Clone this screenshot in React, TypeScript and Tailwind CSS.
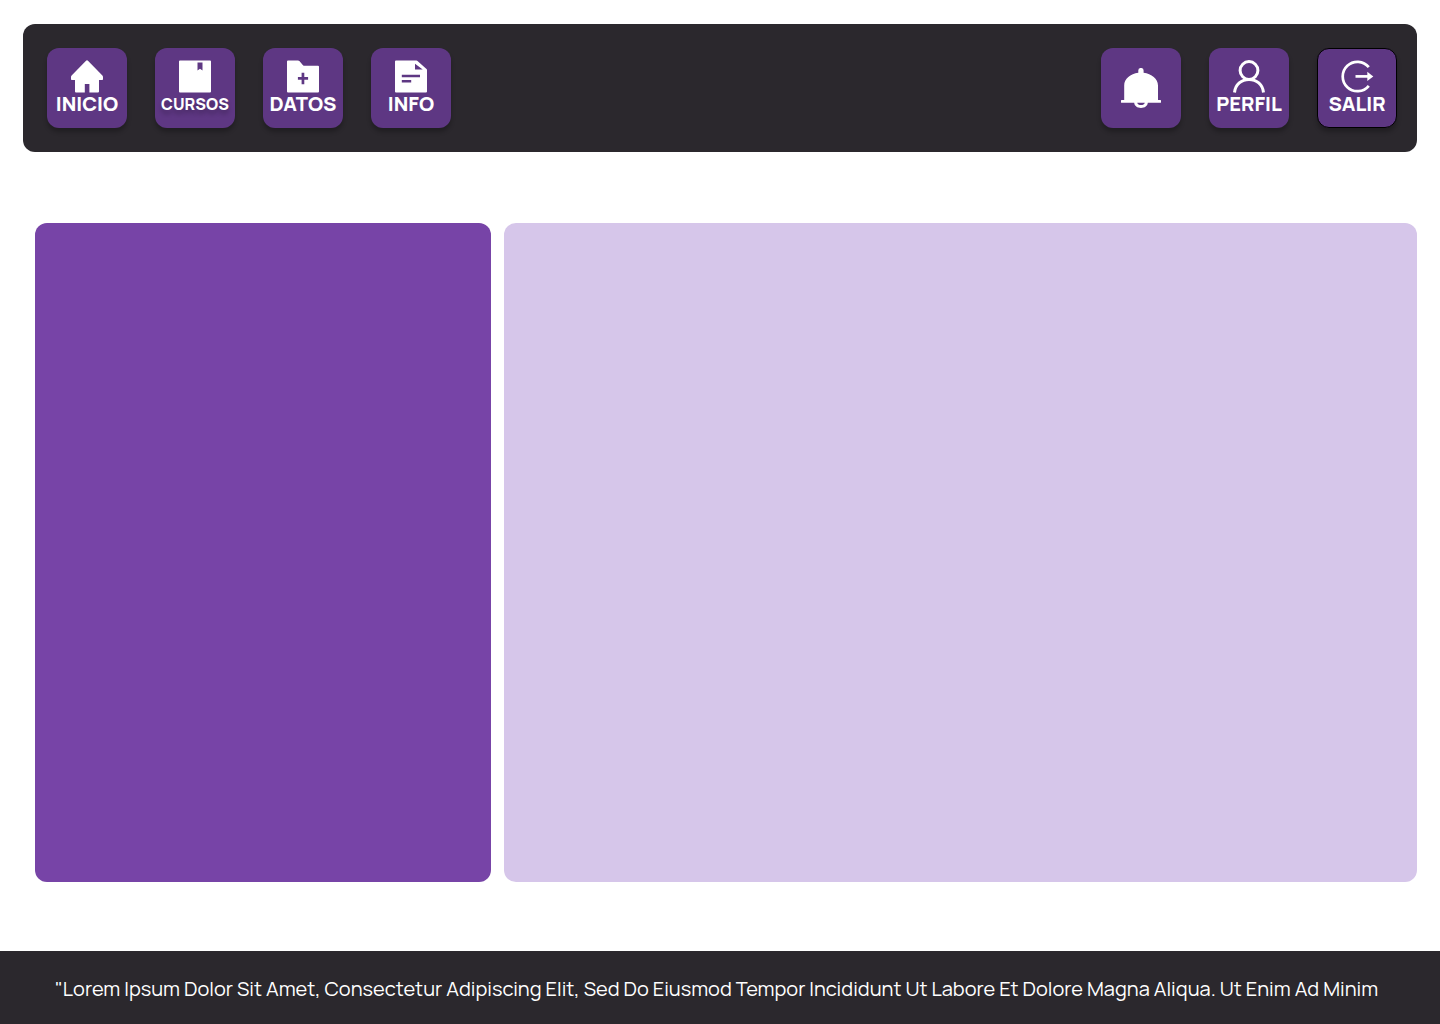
import type { ReactNode } from "react";

type TileProps = {
  label: string;
  icon: ReactNode;
  labelClass?: string;
  outlined?: boolean;
  iconOnly?: boolean;
};

function Tile({ label, icon, labelClass = "text-xl", outlined, iconOnly }: TileProps) {
  return (
    <button
      type="button"
      aria-label={label}
      className={`flex size-20 shrink-0 cursor-pointer flex-col items-center rounded-xl bg-[#5e3783] text-white shadow-[0_4px_4px_rgba(0,0,0,0.25)] ${
        outlined ? "border border-black pt-[11px]" : iconOnly ? "justify-center" : "pt-3"
      }`}
    >
      {icon}
      {!iconOnly && (
        <span className={`whitespace-nowrap leading-6 font-extrabold ${labelClass}`}>{label}</span>
      )}
    </button>
  );
}

const iconProps = {
  viewBox: "0 0 32 32",
  className: "size-8 shrink-0 overflow-visible",
  "aria-hidden": true,
} as const;

const HomeIcon = () => (
  <svg {...iconProps} fill="currentColor">
    <path d="M14.8.9a1.7 1.7 0 0 1 2.4 0L31.4 15.6q.6.6.6 1.5v2.1q0 .8-.8.8H28v11.5q0 1-1 1h-8.6V24h-4.6v8.500H5q-1 0-1-1V20H.8q-.8 0-.8-.8v-2.100q0-.9.6-1.500Z" />
  </svg>
);

const BookIcon = () => (
  <svg {...iconProps} fill="currentColor">
    <path
      fillRule="evenodd"
      d="M1 .5h30q1 0 1 1v30q0 1-1 1H1q-1 0-1-1v-30q0-1 1-1ZM18.500 2.500v8l2.500-1.700 2.500 1.700v-8Z"
    />
  </svg>
);

const FolderIcon = () => (
  <svg {...iconProps} fill="currentColor">
    <path
      fillRule="evenodd"
      d="M1 .5h10q.8 0 1.400.6L16 5.200q.6.6 1.400.6H31q1 0 1 1v24.700q0 1-1 1H1q-1 0-1-1v-30q0-1 1-1ZM14.600 12.800v4.300h-3.700v2.700h3.700v4.500h2.700v-4.500h3.800v-2.700h-3.800v-4.300Z"
    />
  </svg>
);

const FileIcon = () => (
  <svg {...iconProps} fill="currentColor">
    <path
      fillRule="evenodd"
      d="M1 .5h20.500q.6 0 1 .4l9 8q.5.4.5 1v21.600q0 1-1 1H1q-1 0-1-1v-30q0-1 1-1ZM20 3.700v5.800h7.700ZM6.800 14.800v2.400H25v-2.400ZM6.800 20v2.500h9.400V20Z"
    />
  </svg>
);

const BellIcon = () => (
  <svg viewBox="0 0 40 40" className="size-10" fill="currentColor" aria-hidden="true">
    <path
      fillRule="evenodd"
      d="M17.300 4.800V2.500a2.600 2.500 0 0 1 5.300 0v2.300C30.500 6 37 10.800 37 17.500V32h2.400q.6 0 .6.6v1.600q0 .6-.6.6h-12.600C26.500 38 23.800 40 20 40s-6.500-2-6.800-5.200H.6q-.6 0-.6-.6v-1.600q0-.6.6-.6h2.600V17.500C3.200 10.800 9.500 6 17.300 4.800ZM16.200 34.800c.3 1.500 1.900 2.300 3.800 2.300s3.500-.8 3.800-2.300Z"
    />
  </svg>
);

const UserIcon = () => (
  <svg {...iconProps} fill="none" stroke="currentColor" strokeWidth="3">
    <circle cx="16" cy="10.500" r="8.900" />
    <path d="M1.500 32.500C2.300 24.500 8.500 19.400 16 19.400s13.700 5.100 14.500 13.100" />
  </svg>
);

const ExitIcon = () => (
  <svg {...iconProps} fill="none" stroke="currentColor" strokeWidth="2.700">
    <path d="M27.800 7.200A14.700 14.700 0 1 0 27.800 25.800" />
    <path d="M14.500 16.400H27" />
    <path d="M26.300 11.800v9.200l6-4.600Z" fill="currentColor" stroke="none" />
  </svg>
);

export default function App() {
  return (
    <div className="flex min-h-screen flex-col bg-white font-['Manrope','Inter',sans-serif]">
      <header className="mx-[23px] mt-6 flex items-center justify-between rounded-xl bg-[#2b282d] py-6 pr-5 pl-6">
        <nav aria-label="Principal" className="flex gap-7">
          <Tile label="INICIO" icon={<HomeIcon />} />
          <Tile
            label="CURSOS"
            icon={<BookIcon />}
            labelClass="text-base [text-shadow:0_4px_4px_rgba(0,0,0,0.25)]"
          />
          <Tile label="DATOS" icon={<FolderIcon />} />
          <Tile label="INFO" icon={<FileIcon />} />
        </nav>
        <nav aria-label="Cuenta" className="flex gap-7">
          <Tile label="Notificaciones" icon={<BellIcon />} iconOnly />
          <Tile label="PERFIL" icon={<UserIcon />} />
          <Tile label="SALIR" icon={<ExitIcon />} outlined />
        </nav>
      </header>

      <main className="mt-[71px] mr-[23px] mb-[69px] ml-[35px] grid grow grid-cols-[1fr_2fr] gap-[13px]">
        <aside className="rounded-xl bg-[#7744a7]" />
        <section className="rounded-xl bg-[#d6c6ea]" />
      </main>

      <footer className="bg-[#2b282d] px-[55px] pt-6 pb-[21px] text-xl leading-7 text-white">
        <p className="whitespace-nowrap">
          "Lorem Ipsum Dolor Sit Amet, Consectetur Adipiscing Elit, Sed Do Eiusmod Tempor Incididunt Ut Labore Et Dolore Magna Aliqua. Ut Enim Ad Minim
        </p>
      </footer>
    </div>
  );
}
